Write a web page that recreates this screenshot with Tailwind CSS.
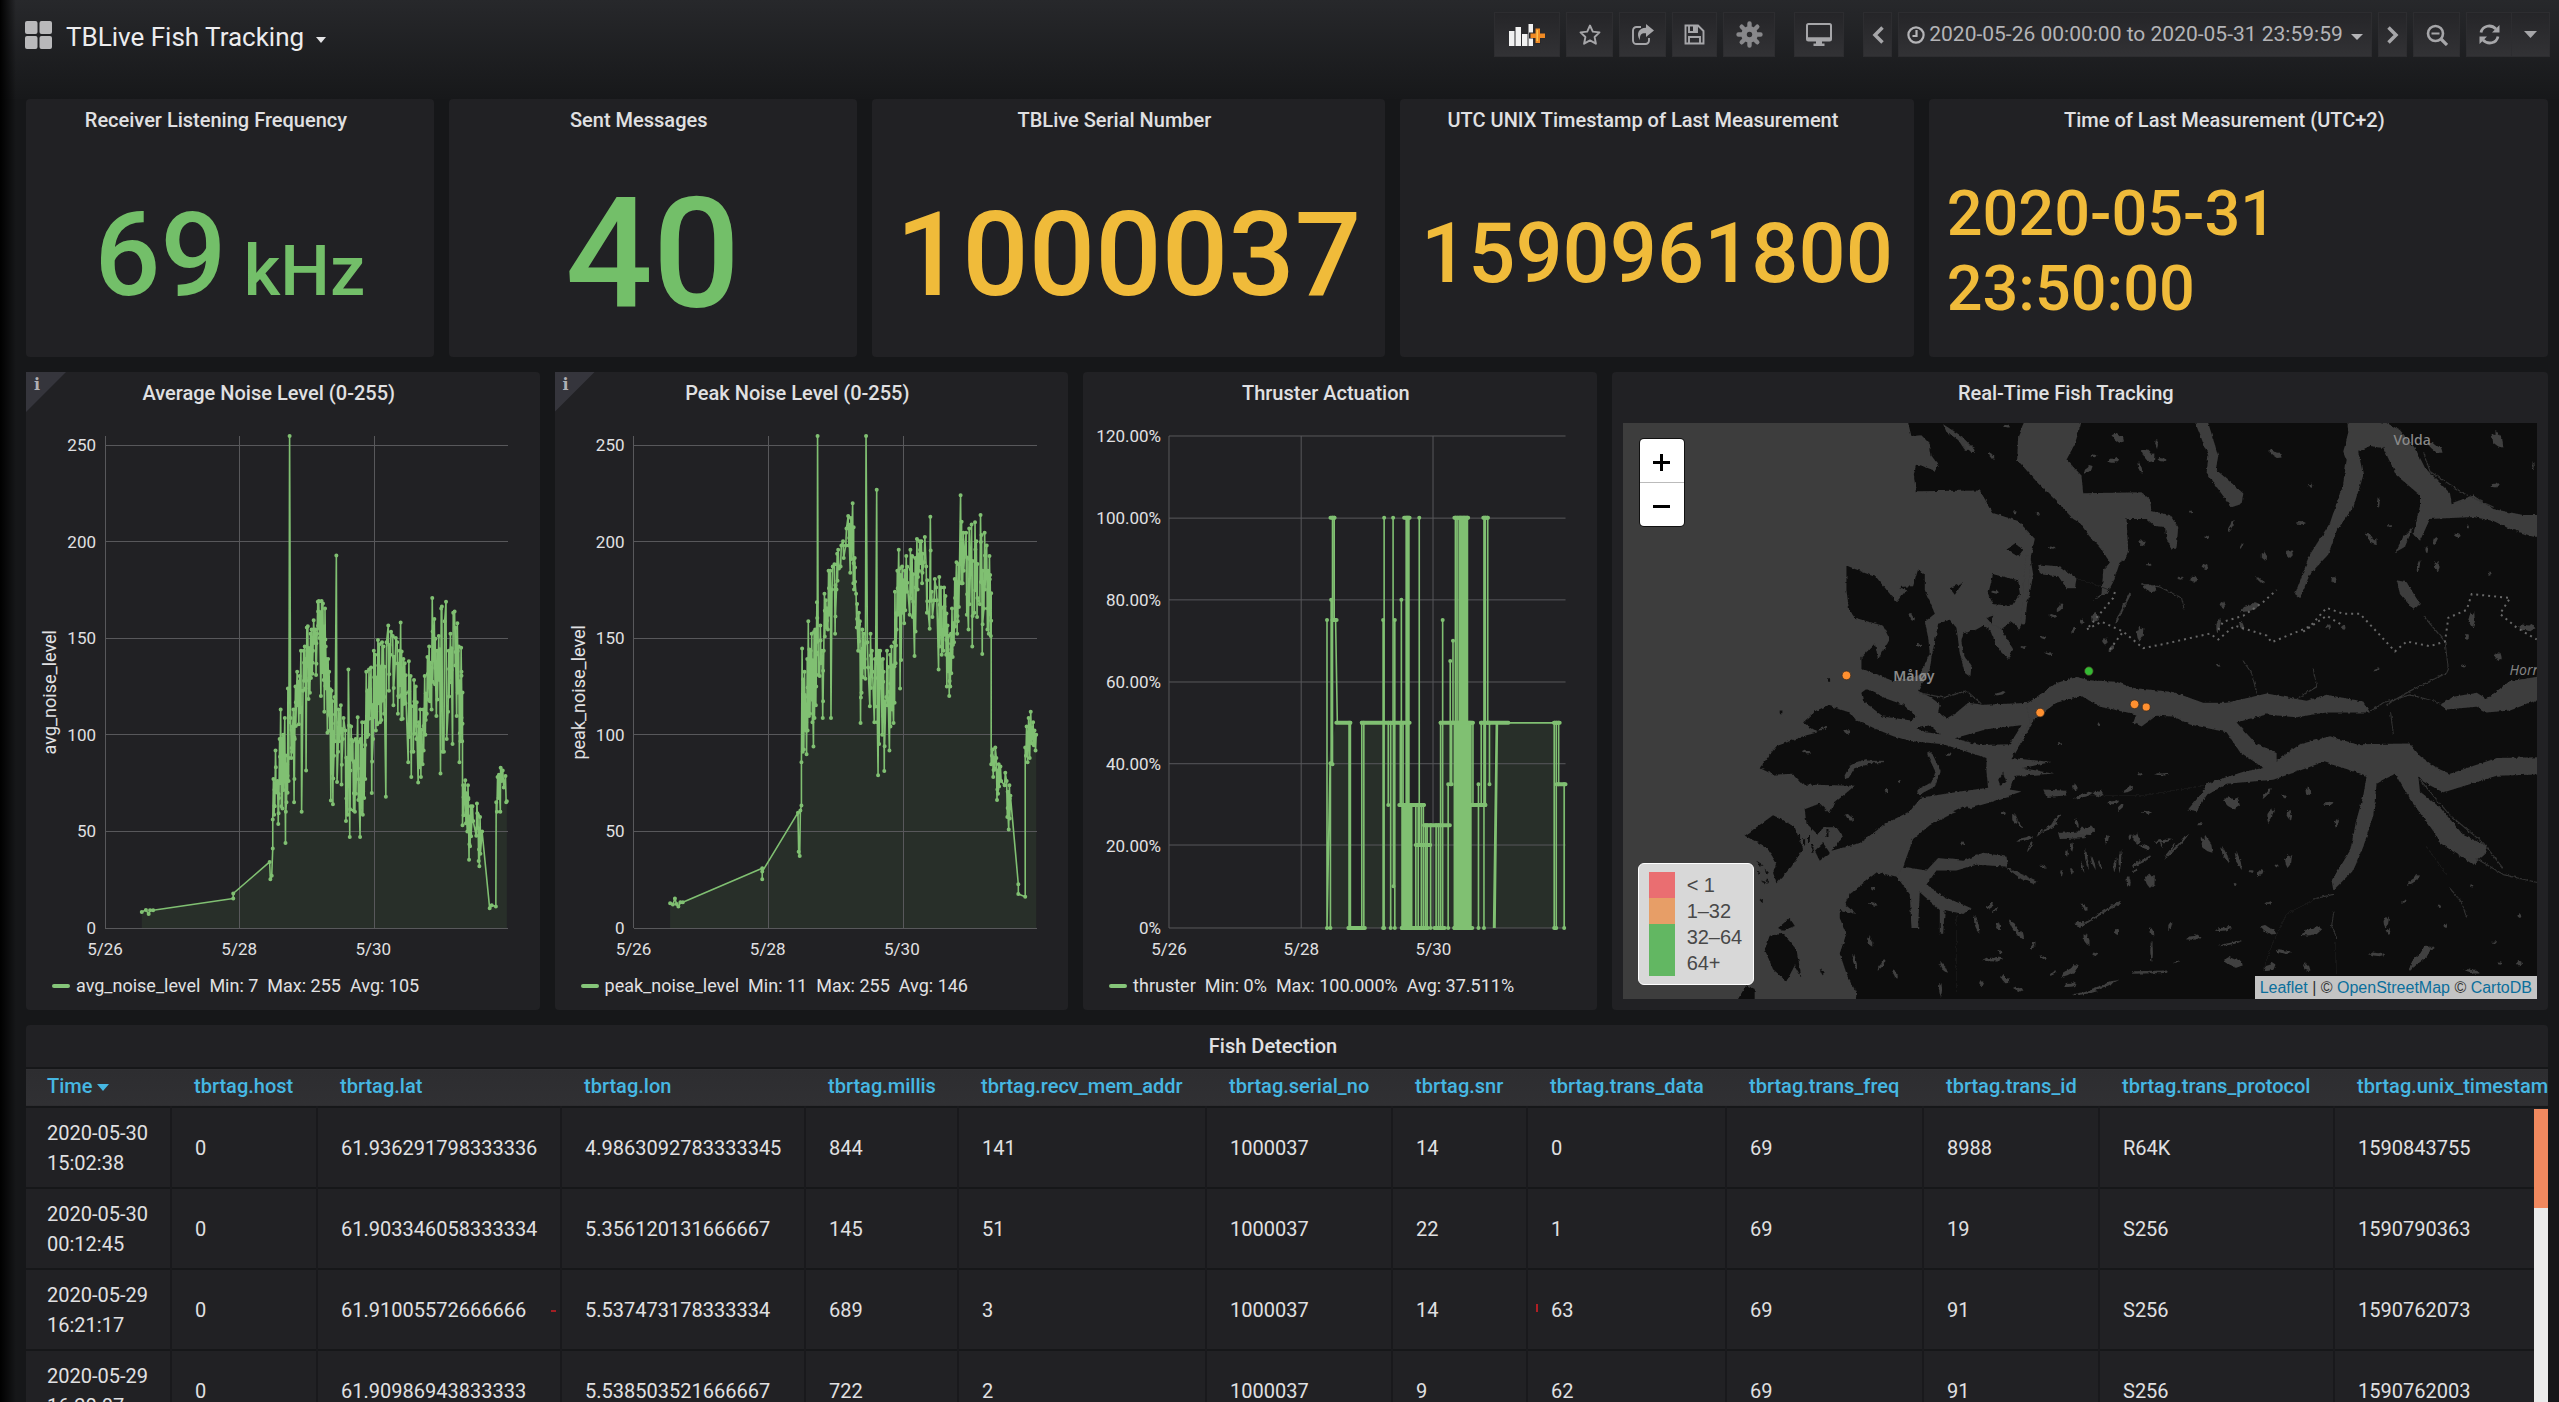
<!DOCTYPE html>
<html lang="en">
<head>
<meta charset="utf-8">
<meta name="viewport" content="width=device-width, initial-scale=1">
<title>TBLive Fish Tracking</title>
<script src="https://cdn.jsdelivr.net/npm/@tailwindcss/browser@4"></script>
</head>
<body class="relative flex h-screen flex-col overflow-hidden bg-[#161719] font-['Roboto',sans-serif] text-xl text-[#e0e0e2]">

<header class="flex h-[99px] shrink-0 items-start justify-between bg-linear-to-b from-[#27282b] to-[#17181a] pt-3 pr-[9px] pl-[25px]">
  <button class="flex h-[46px] items-center gap-[14px] text-[26px] text-[#ececee]">
    <svg class="h-7 w-[27px]" viewBox="0 0 27 28" fill="#b9b9bb"><rect width="12.5" height="13" rx="2"/><rect x="14.500" width="12.500" height="13" rx="2"/><rect y="15" width="12.500" height="13" rx="2"/><rect x="14.500" y="15" width="12.500" height="13" rx="2"/></svg>
    <span class="flex items-center gap-3 pt-1">TBLive Fish Tracking
      <svg class="mt-1.5 h-[6px] w-[10px]" viewBox="0 0 10 6" fill="#e4e4e6"><path d="M0 0h10L5 6z"/></svg></span>
  </button>
  <nav class="flex gap-[6px] text-[#a6a6a9]" aria-label="Dashboard tools">
    <button aria-label="Add panel" class="flex h-[45px] w-[66px] items-center justify-center border border-[#2d2d30] bg-linear-to-b from-[#252528] to-[#323235]">
      <svg class="h-[23px] w-9" viewBox="0 0 36 23"><path fill="#f2f2f2" d="M0 8h5.500v15H0zM6.500 4H12v19H6.500zM13 11h5.500v12H13zM19.500 1H24v22h-4.500z"/><path d="M20 9.500h5V4h7v5.500h4v6h-4V21h-7v-5.500h-5z" fill="#29292c"/><path fill="#f08a24" d="M26.500 5.500h4.500v5h5v4.500h-5v5h-4.500v-5h-5v-4.500h5z"/><path d="M27.500 7h1.500v11h-1.500z" fill="#fbc04d"/></svg>
    </button>
    <button aria-label="Star" class="flex h-[45px] w-[47px] items-center justify-center border border-[#2d2d30] bg-linear-to-b from-[#252528] to-[#323235]">
      <svg class="h-[22px] w-[22px]" viewBox="0 0 22 22" fill="none" stroke="currentColor" stroke-width="1.900" stroke-linejoin="round"><path d="M11 1.500l2.800 6.100 6.700.8-4.900 4.600 1.300 6.700L11 16.400l-5.900 3.300 1.300-6.700L1.500 8.400l6.700-.8z"/></svg>
    </button>
    <button aria-label="Share" class="flex h-[45px] w-[47px] items-center justify-center border border-[#2d2d30] bg-linear-to-b from-[#252528] to-[#323235]">
      <svg class="h-[22px] w-6" viewBox="0 0 24 22" fill="none" stroke="currentColor" stroke-width="1.900"><path d="M10 3H5.500A3.500 3.500 0 002 6.500v10A3.500 3.500 0 005.500 20h9a3.500 3.500 0 003.500-3.500V14"/><path fill="currentColor" stroke="none" d="M15 0l8 6.500-8 6.500V9.300c-4.500-.3-6.500 1.200-6 7C4.500 9.500 8 3.900 15 3.700z"/></svg>
    </button>
    <button aria-label="Save" class="flex h-[45px] w-[45px] items-center justify-center border border-[#2d2d30] bg-linear-to-b from-[#252528] to-[#323235]">
      <svg class="h-[21px] w-[21px]" viewBox="0 0 21 21" fill="none" stroke="currentColor" stroke-width="1.900"><path d="M1.500 1.500h12.500l5.500 5.500v12.500h-18z"/><path d="M5 19.500v-6.500h11v6.500M5 1.500v6.500h8v-6.500"/><path d="M10.500 2v5" stroke-width="3"/></svg>
    </button>
    <button aria-label="Settings" class="flex h-[45px] w-[52px] items-center justify-center border border-[#2d2d30] bg-linear-to-b from-[#252528] to-[#323235] text-[#88888b]">
      <svg class="h-[27px] w-[27px]" viewBox="0 0 27 27"><g stroke="currentColor" stroke-width="4.400" stroke-linecap="round"><path d="M13.500 2.500v22M2.500 13.500h22M5.700 5.700l15.600 15.600M21.300 5.700L5.700 21.300"/></g><circle cx="13.500" cy="13.500" r="8.300" fill="currentColor"/><circle cx="13.500" cy="13.500" r="2.700" fill="#2c2c2f"/></svg>
    </button>
    <button aria-label="Cycle view mode" class="mx-[13px] flex h-[45px] w-[50px] items-center justify-center border border-[#2d2d30] bg-linear-to-b from-[#252528] to-[#323235]">
      <svg class="h-[23px] w-[26px]" viewBox="0 0 26 23" fill="none" stroke="currentColor" stroke-width="2"><rect x="1" y="1" width="24" height="16.500" rx="1.500"/><path d="M1.500 16h23" stroke-width="3.500"/><path fill="currentColor" stroke="none" d="M10 17h6v3.500h2.500V23h-11v-2.500H10z"/></svg>
    </button>
    <button aria-label="Earlier" class="flex h-[45px] w-[29px] items-center justify-center border border-[#2d2d30] bg-linear-to-b from-[#252528] to-[#323235]">
      <svg class="h-[18px] w-3" viewBox="0 0 12 18" fill="none" stroke="currentColor" stroke-width="3.500"><path d="M10.500 1.500L3 9l7.500 7.500"/></svg>
    </button>
    <button class="flex h-[45px] w-[474px] items-center justify-center gap-1 border border-[#2d2d30] bg-linear-to-b from-[#252528] to-[#323235] pt-px text-[21px] whitespace-nowrap text-[#b4b4b7]">
      <svg class="h-[18px] w-[18px]" viewBox="0 0 18 18" fill="none" stroke="currentColor" stroke-width="2.200"><circle cx="9" cy="9" r="7.600"/><path d="M9.500 4v6H5.500"/></svg>
      2020-05-26 00:00:00 to 2020-05-31 23:59:59
      <svg class="mt-1 ml-1 h-[6px] w-3" viewBox="0 0 12 6" fill="currentColor"><path d="M0 0h12L6 6z"/></svg>
    </button>
    <button aria-label="Later" class="flex h-[45px] w-[29px] items-center justify-center border border-[#2d2d30] bg-linear-to-b from-[#252528] to-[#323235]">
      <svg class="h-[18px] w-3" viewBox="0 0 12 18" fill="none" stroke="currentColor" stroke-width="3.500"><path d="M1.500 1.500L9 9l-7.500 7.500"/></svg>
    </button>
    <button aria-label="Zoom out" class="flex h-[45px] w-[47px] items-center justify-center border border-[#2d2d30] bg-linear-to-b from-[#252528] to-[#323235]">
      <svg class="h-[22px] w-[22px]" viewBox="0 0 22 22" fill="none" stroke="currentColor" stroke-width="2.600"><circle cx="9.500" cy="9.500" r="7.500"/><path d="M15 15l6 6" stroke-width="3.200"/><path d="M5.500 9.500h8" stroke-width="2"/></svg>
    </button>
    <div class="flex">
      <button aria-label="Refresh" class="flex h-[45px] w-[46px] items-center justify-center border border-[#2d2d30] bg-linear-to-b from-[#252528] to-[#323235]">
        <svg class="h-[21px] w-[21px]" viewBox="0 0 21 21" fill="none" stroke="currentColor" stroke-width="2.800"><path d="M2 8.500C3.500 1.500 12 0 17 5M19 12.500C17.500 19.500 9 21 4 16"/><path fill="currentColor" stroke="none" d="M20.500 1v7.500h-7.500zM.5 20v-7.500H8z"/></svg>
      </button>
      <button aria-label="Refresh interval" class="flex h-[45px] w-[38px] items-center justify-center border border-l-0 border-[#2d2d30] bg-linear-to-b from-[#252528] to-[#323235]">
        <svg class="h-[7px] w-[13px]" viewBox="0 0 13 7" fill="currentColor"><path d="M0 0h13L6.500 7z"/></svg>
      </button>
    </div>
  </nav>
</header>

<main class="grid min-h-0 flex-1 grid-cols-24 grid-rows-[258px_638px_minmax(0,1fr)] gap-[15px] pr-[11px] pl-[26px]">
  <section class="col-span-4 flex min-w-0 flex-col rounded-sm bg-[#212124]">
    <h2 class="flex h-[42px] shrink-0 items-center justify-center pr-7 font-medium">Receiver Listening Frequency</h2>
    <p class="flex flex-1 items-center justify-center pt-3 font-medium text-[#73bf69]"><span class="text-[116px] leading-none whitespace-pre">69<span class="text-[70px]"> kHz</span></span></p>
  </section>
  <section class="col-span-4 flex min-w-0 flex-col rounded-sm bg-[#212124]">
    <h2 class="flex h-[42px] shrink-0 items-center justify-center pr-7 font-medium">Sent Messages</h2>
    <p class="flex flex-1 items-center justify-center pt-3 text-[154px] leading-none font-medium text-[#73bf69]">40</p>
  </section>
  <section class="col-span-5 flex min-w-0 flex-col rounded-sm bg-[#212124]">
    <h2 class="flex h-[42px] shrink-0 items-center justify-center pr-7 font-medium">TBLive Serial Number</h2>
    <p class="flex flex-1 items-center justify-center pt-3 text-[117px] leading-none font-medium text-[#f0bb3a]">1000037</p>
  </section>
  <section class="col-span-5 flex min-w-0 flex-col rounded-sm bg-[#212124]">
    <h2 class="flex h-[42px] shrink-0 items-center justify-center pr-7 font-medium">UTC UNIX Timestamp of Last Measurement</h2>
    <p class="flex flex-1 items-center justify-center pt-2 text-[83px] leading-none font-medium text-[#f0bb3a]">1590961800</p>
  </section>
  <section class="col-span-6 flex min-w-0 flex-col rounded-sm bg-[#212124]">
    <h2 class="flex h-[42px] shrink-0 items-center justify-center pr-7 font-medium">Time of Last Measurement (UTC+2)</h2>
    <p class="flex flex-1 items-center px-[18px] pt-1 text-[63px] leading-[75px] font-medium text-[#f0bb3a]">2020-05-31<br>23:50:00</p>
  </section>

  <section class="relative col-span-5 flex min-w-0 flex-col rounded-sm bg-[#212124]">
    <span class="absolute top-0 left-0 h-10 w-10 bg-[#35353c] pt-[3px] pl-2 font-['DejaVu_Serif',serif] text-base leading-5 font-bold text-[#b0b0b4] [clip-path:polygon(0_0,100%_0,0_100%)]">i</span>
    <h2 class="flex h-[42px] shrink-0 items-center justify-center pr-7 font-medium">Average Noise Level (0-255)</h2>
    <div class="mt-[22px] grid grid-cols-[79px_1fr] grid-rows-[492px_43px] pr-8 text-[17px]">
      <div class="flex justify-between pr-[9px]">
        <span class="flex items-center justify-center pt-5 pl-2.5 text-lg [writing-mode:sideways-lr]">avg_noise_level</span>
        <div class="flex flex-col items-end justify-between pt-[9px] leading-0"><span class="h-0">250</span><span class="h-0">200</span><span class="h-0">150</span><span class="h-0">100</span><span class="h-0">50</span><span class="h-0">0</span></div>
      </div>
      <svg id="avg" class="h-full w-full overflow-visible" viewBox="305 180 1171 1169" preserveAspectRatio="none"></svg>
      <div class="col-start-2 grid grid-cols-3 items-center"><span class="flex w-0 justify-center">5/26</span><span class="flex w-0 justify-center">5/28</span><span class="flex w-0 justify-center">5/30</span></div>
    </div>
    <p class="flex items-center gap-[9px] pl-[26px] text-lg leading-[30px]"><span class="flex items-center gap-[6px]"><span class="h-1 w-[18px] rounded-sm bg-[#85c579]"></span>avg_noise_level</span><span>Min: 7</span><span>Max: 255</span><span>Avg: 105</span></p>
  </section>
  <section class="relative col-span-5 flex min-w-0 flex-col rounded-sm bg-[#212124]">
    <span class="absolute top-0 left-0 h-10 w-10 bg-[#35353c] pt-[3px] pl-2 font-['DejaVu_Serif',serif] text-base leading-5 font-bold text-[#b0b0b4] [clip-path:polygon(0_0,100%_0,0_100%)]">i</span>
    <h2 class="flex h-[42px] shrink-0 items-center justify-center pr-7 font-medium">Peak Noise Level (0-255)</h2>
    <div class="mt-[22px] grid grid-cols-[79px_1fr] grid-rows-[492px_43px] pr-8 text-[17px]">
      <div class="flex justify-between pr-[9px]">
        <span class="flex items-center justify-center pt-5 pl-2.5 text-lg [writing-mode:sideways-lr]">peak_noise_level</span>
        <div class="flex flex-col items-end justify-between pt-[9px] leading-0"><span class="h-0">250</span><span class="h-0">200</span><span class="h-0">150</span><span class="h-0">100</span><span class="h-0">50</span><span class="h-0">0</span></div>
      </div>
      <svg id="peak" class="h-full w-full overflow-visible" viewBox="273 180 1171 1169" preserveAspectRatio="none"></svg>
      <div class="col-start-2 grid grid-cols-3 items-center"><span class="flex w-0 justify-center">5/26</span><span class="flex w-0 justify-center">5/28</span><span class="flex w-0 justify-center">5/30</span></div>
    </div>
    <p class="flex items-center gap-[9px] pl-[26px] text-lg leading-[30px]"><span class="flex items-center gap-[6px]"><span class="h-1 w-[18px] rounded-sm bg-[#85c579]"></span>peak_noise_level</span><span>Min: 11</span><span>Max: 255</span><span>Avg: 146</span></p>
  </section>
  <section class="relative col-span-5 flex min-w-0 flex-col rounded-sm bg-[#212124]">
    <h2 class="flex h-[42px] shrink-0 items-center justify-center pr-7 font-medium">Thruster Actuation</h2>
    <div class="mt-[22px] grid grid-cols-[86px_1fr] grid-rows-[492px_43px] pr-[31px] text-[17px]">
      <div class="flex justify-end pr-2">
        <div class="flex flex-col items-end justify-between leading-0"><span class="h-0">120.00%</span><span class="h-0">100.00%</span><span class="h-0">80.00%</span><span class="h-0">60.00%</span><span class="h-0">40.00%</span><span class="h-0">20.00%</span><span class="h-0">0%</span></div>
      </div>
      <svg id="thr" class="h-full w-full overflow-visible" viewBox="289 181 1152 1168" preserveAspectRatio="none"></svg>
      <div class="col-start-2 grid grid-cols-3 items-center"><span class="flex w-0 justify-center">5/26</span><span class="flex w-0 justify-center">5/28</span><span class="flex w-0 justify-center">5/30</span></div>
    </div>
    <p class="flex items-center gap-[9px] pl-[26px] text-lg leading-[30px]"><span class="flex items-center gap-[6px]"><span class="h-1 w-[18px] rounded-sm bg-[#85c579]"></span>thruster</span><span>Min: 0%</span><span>Max: 100.000%</span><span>Avg: 37.511%</span></p>
  </section>

  <section class="col-span-9 flex min-w-0 flex-col rounded-sm bg-[#212124] px-[11px] pb-[11px]">
    <h2 class="flex h-[51px] shrink-0 items-center justify-center pr-7 pb-[9px] font-medium">Real-Time Fish Tracking</h2>
    <div class="relative flex-1 overflow-hidden bg-[#3c3c3c]">
      <svg class="absolute inset-0 h-full w-full" viewBox="40 57 2742 1458" preserveAspectRatio="none">
        <defs><filter id="rough" x="0" y="0" width="100%" height="100%"><feTurbulence type="fractalNoise" baseFrequency=".09" numOctaves="2" seed="4"/><feDisplacementMap in="SourceGraphic" scale="9" xChannelSelector="R" yChannelSelector="G"/></filter></defs>
        <g filter="url(#rough)">
          <rect x="0" y="0" width="2900" height="1600" fill="#3c3c3c"/>
          <g fill="#0e0e0e">
            <path d="M890 40 905 90 935 88 960 110 965 140 988 165 975 178 920 160 912 185 918 230 1110 228 1150 285 1225 305 1275 350 1262 400 1270 440 1260 490 1240 550 1230 580 1205 560 1180 575 1165 590 1120 570 1100 580 1060 590 1055 610 1065 650 1085 670 1082 700 1065 690 1050 640 1040 575 1020 555 985 565 975 610 965 650 960 680 935 720 925 735 960 750 990 768 985 790 1010 805 1040 790 1075 765 1120 770 1260 765 1300 740 1300 790 1270 810 1240 860 1205 905 1325 915 1240 930 1330 945 1215 950 1200 985 1235 990 1130 1020 1030 1045 960 1075 910 1110 880 1180 900 1240 860 1205 800 1195 720 1250 705 1275 740 1300 690 1290 690 1310 710 1350 690 1400 710 1450 740 1500 735 1550 2850 1550 2850 40z"/>
            <path d="M450 930 500 875 580 850 625 840 580 815 620 785 655 772 720 790 740 810 850 850 900 862 1000 870 1130 905 1130 940 1135 980 1050 990 935 1005 900 1040 830 1070 750 1120 665 1140 700 1105 680 1080 640 1080 625 1100 590 1070 585 1035 630 1020 660 1045 672 1020 735 975 580 972 550 945 490 947z"/>
            <path d="M405 1102 490 1050 520 1062 555 1080 580 1135 545 1180 500 1222 490 1195 500 1170 470 1130z"/>
            <path d="M710 418 760 435 800 448 860 510 890 480 868 472 910 470 925 428 945 440 945 480 975 540 945 560 955 600 960 640 930 695 850 710 790 690 755 680 755 650 795 615 805 655 840 605 820 570 735 550 718 530 710 480z"/>
            <path d="M755 740 770 730 830 755 880 770 920 800 905 810 820 800 760 760zM920 830 960 822 990 845 950 840zM1035 855 1130 832 1235 822 1200 870 1110 872zM1135 490 1150 440 1225 455 1230 490 1205 520 1150 515zM1020 475 1060 460 1035 492zM1190 378 1215 362 1240 378 1225 395zM465 1390 480 1355 520 1350 560 1390 575 1460 555 1430 530 1470 490 1440zM385 1515 410 1480 435 1490 435 1540 385 1540zM505 1335 540 1310 555 1330 520 1342zM1165 960 1180 942 1190 965 1172 975zM1030 1040 1060 1028 1085 1035 1050 1047zM615 1140 640 1120 660 1145 630 1165zM1130 550 1150 545 1145 565zM440 1165 460 1175 450 1180zM450 1265 460 1262 458 1272zM630 1440 645 1450 638 1455zM655 703l6 0 0 9-6 0zM510 785l8 0 0 7-8 0z"/>
            <path d="M565 1100l6 0 0 14-6 0zM580 1108l6 0 0 16-6 0zM595 1100l5 0 0 20-5 0zM605 1125l6 0 0 20-6 0zM650 1085l6 0 0 20-6 0zM440 1190l12 6-4 6zM465 1185l12 10-6 6zM455 1215l14 4-6 6zM470 1210l8 8-4 6z"/>
          </g>
          <g fill="#3c3c3c">
            <path d="M1250 40 1420 40 1395 110 1370 150 1415 190 1420 235 1595 232 1620 250 1625 280 1680 290 1705 320 1700 375 1685 375 1670 350 1665 320 1635 318 1610 300 1550 300 1555 380 1548 400 1530 410 1510 460 1490 490 1450 505 1475 490 1480 430 1500 410 1470 370 1440 345 1410 310 1390 300 1340 255 1285 210 1222 150 1225 90z"/>
            <path d="M1250 768 1340 715 1400 700 1440 708 1520 712 1570 728 1690 738 1780 765 1850 765 1970 742 2090 760 2150 745 2260 762 2280 790 2150 790 2060 802 1970 795 1880 815 1940 870 2000 890 2000 912 2070 870 2160 850 2240 870 2400 868 2430 900 2480 930 2520 945 2660 905 2850 902 2850 945 2660 950 2500 992 2440 965 2425 950 2430 990 2490 1030 2560 1100 2625 1125 2630 1145 2590 1175 2490 1120 2470 1090 2400 1010 2355 945 2300 970 2290 1050 2260 1130 2230 1190 2170 1240 2165 1215 2220 1140 2240 1060 2260 1000 2270 950 2200 930 2140 915 2060 940 1990 960 1850 970 1790 1000 1760 1040 1735 1035 1770 1000 1790 970 1900 940 1960 930 1890 890 1850 840 1740 820 1690 800 1640 798 1595 825 1570 815 1580 795 1470 775 1415 748 1340 765 1260 815z"/>
            <path d="M1760 40 1795 57 1825 140 1818 175 1900 235 1895 262 1865 270 1790 185 1795 140 1760 65zM2210 40 2330 57 2370 75 2415 120 2445 170 2520 235 2525 260 2590 240 2650 275 2740 290 2850 290 2850 345 2770 345 2700 325 2650 305 2590 295 2460 300 2430 355 2410 340 2430 265 2430 240 2360 190 2320 120 2280 115 2245 130 2260 190 2230 270 2180 330 2155 390 2100 440 2070 500 2055 490 2100 390 2160 310 2200 210 2210 150 2200 130 2215 80z"/>
            <path d="M2410 320 2385 370 2355 385 2380 345zM2360 455 2390 460 2430 515 2410 530 2370 490zM2490 770 2530 750 2600 740 2630 755 2700 710 2850 690 2850 735 2700 785 2630 790 2600 775 2510 782zM1285 415 1350 420 1400 450 1395 475 1370 475 1345 445 1290 440zM1130 560 1175 580 1210 630 1195 655 1160 620z"/>
            <path d="M880 1180 950 1190 985 1158 1060 1165 1120 1145 1190 1155 1195 1180 1100 1175 1040 1190 980 1190 950 1225 1000 1255 1085 1285 1060 1300 1005 1290 1000 1350 990 1350 990 1290 930 1245 925 1335 905 1335 900 1250 860 1205zM1185 1180 1280 1215 1275 1225 1235 1212zM1000 60 1055 90 1095 125 1065 125 1045 100 1010 80zM1300 985 1370 988 1370 1000 1310 1004zM1345 1095 1425 1090 1425 1108 1350 1110z"/>
          </g>
          <g fill="none" stroke="#3c3c3c" stroke-linecap="round" stroke-linejoin="round">
            <path stroke-width="14" d="M960 895 985 940 970 972 930 990M712 950 730 925 770 915M1255 400 1240 560"/>
            <path stroke-width="6" d="M770 915 820 915M1270 810 1240 850 1215 890M1570 1448 1670 1446M1410 1332 1470 1300 1530 1270M1570 1178 1620 1155M2400 1440 2470 1385M1520 560 1560 490"/>
            <path stroke-width="3" stroke="#343434" d="M930 740 1000 752 1070 735 1115 768M1900 660 1925 690 1940 740M2060 755 2120 725 2110 680M1595 465 1650 472 1715 500 1722 525M2285 785 2320 765 2400 745 2490 765M2350 845 2342 790M2330 770 2400 735 2510 690 2515 680 2505 610 2440 545M2600 1160 2680 1200 2782 1220M2430 960 2520 1050 2620 1120 2680 1185M2170 1250 2110 1262M2172 1295 2165 1330 2180 1360M2520 1235 2555 1270 2570 1310M2440 130 2460 180 2560 235 2650 270"/>
            <path stroke-width="2" stroke="#1c1c1c" d="M2120 1260 2030 1300 1990 1370 1960 1440M1410 1000 1600 1000 1780 975M1040 1300 1040 1500M1400 450 1500 480M2175 1370 2180 1450M2450 1130 2510 1200"/>
          </g>
          <g id="lakes" fill="#404040"></g>
        </g>
        <g fill="none" stroke="#686868" stroke-width="2"><path vector-effect="non-scaling-stroke" stroke-dasharray="2 4" d="M1515 485 1510 500 1430 580 1475 560 1540 585 1600 627 1670 615 1800 590 1825 605 1875 570 1970 595 1985 612 2100 572 2150 525 2200 540 2250 540 2355 635 2390 610 2460 622 2505 610 2515 550 2570 530 2585 490 2700 500 2670 540 2720 575 2780 605M1825 580 1840 560 1900 545 1960 510 2000 480M1500 630 1540 585M2080 585 2150 545 2200 570"/></g>
        <g stroke="#3b2a1c" stroke-width="2"><g fill="#ff9030"><ellipse cx="710" cy="696" rx="13" ry="11"/><ellipse cx="1291" cy="790" rx="13" ry="11"/><ellipse cx="1574" cy="769" rx="13" ry="11"/><ellipse cx="1609" cy="776" rx="12" ry="10"/></g><ellipse cx="1437" cy="685" rx="13" ry="11" fill="#34b934"/></g>
      </svg>
      <span class="absolute top-[42.5%] left-[29.6%] font-['Noto_Sans',sans-serif] text-sm leading-4 font-semibold text-[#8a8a8a]">Måløy</span>
      <span class="absolute top-[1.5%] left-[84.3%] font-['Noto_Sans',sans-serif] text-sm leading-4 font-medium text-[#8a8a8a]">Volda</span>
      <span class="absolute top-[41.5%] left-[97%] font-['Noto_Sans',sans-serif] text-sm leading-4 text-[#828282] italic">Horn</span>
      <div class="absolute top-4 left-[17px] flex w-11 flex-col overflow-hidden rounded-sm bg-white text-black shadow-[0_0_0_1px_#111]">
        <button aria-label="Zoom in" class="flex h-11 items-center justify-center border-b border-[#bbb] pt-1"><svg class="h-[17px] w-[17px]" viewBox="0 0 17 17"><path stroke="#000" stroke-width="3" d="M0 8.500h17M8.500 0v17"/></svg></button>
        <button aria-label="Zoom out of map" class="flex h-[43px] items-center justify-center pt-1"><svg class="h-[17px] w-[17px]" viewBox="0 0 17 17"><path stroke="#000" stroke-width="3" d="M0 8.500h17"/></svg></button>
      </div>
      <ul class="absolute bottom-[14px] left-[15px] w-[116px] rounded-md border border-white bg-[#d8d8d8] py-2 pl-[10px] font-['Liberation_Sans',sans-serif] text-xl leading-[26px] text-[#484848]">
        <li class="flex gap-3"><span class="w-[26px] bg-[#ea6e71]"></span>&lt; 1</li>
        <li class="flex gap-3"><span class="w-[26px] bg-[#e79e67]"></span>1–32</li>
        <li class="flex gap-3"><span class="w-[26px] bg-[#62b762]"></span>32–64</li>
        <li class="flex gap-3"><span class="w-[26px] bg-[#62b762]"></span>64+</li>
      </ul>
      <p class="absolute right-0 bottom-0 bg-[#c4c4c4] px-[5px] font-['Liberation_Sans',sans-serif] text-base leading-[23px] text-[#333]"><a href="#" class="text-[#0b6f9c]">Leaflet</a> | © <a href="#" class="text-[#0b6f9c]">OpenStreetMap</a> © <a href="#" class="text-[#0b6f9c]">CartoDB</a></p>
    </div>
  </section>

  <section class="relative col-span-24 flex min-w-0 flex-col overflow-hidden rounded-t-sm bg-[#212124]">
    <h2 class="flex h-[42px] shrink-0 items-center justify-center pr-7 font-medium">Fish Detection</h2>
    <table class="w-full table-fixed border-collapse text-left">
      <thead>
        <tr id="cols" class="h-[39px] border-y-2 border-[#161719] bg-linear-to-b from-[#2d2d30] to-[#303033] text-[#46b7e2]"></tr>
      </thead>
      <tbody id="rows"></tbody>
    </table>
    <div class="absolute top-[84px] right-0 bottom-0 w-[14px] bg-[#ebebeb]"><div class="h-[99px] bg-[#f1895f]"></div></div>
  </section>
</main>
<div class="pointer-events-none absolute inset-y-0 left-0 w-4 bg-linear-to-r from-black to-transparent"></div>

<script>
// Table
const cols = [['Time','w-[145px]'],['tbrtag.host','w-[146px]'],['tbrtag.lat','w-[244px]'],['tbrtag.lon','w-[244px]'],['tbrtag.millis','w-[153px]'],['tbrtag.recv_mem_addr','w-[248px]'],['tbrtag.serial_no','w-[186px]'],['tbrtag.snr','w-[135px]'],['tbrtag.trans_data','w-[199px]'],['tbrtag.trans_freq','w-[197px]'],['tbrtag.trans_id','w-[176px]'],['tbrtag.trans_protocol','w-[235px]'],['tbrtag.unix_timestamp','w-[214px]']];
const rows = [
  ['2020-05-30 15:02:38','0','61.936291798333336','4.9863092783333345','844','141','1000037','14','0','69','8988','R64K','1590843755'],
  ['2020-05-30 00:12:45','0','61.903346058333334','5.356120131666667','145','51','1000037','22','1','69','19','S256','1590790363'],
  ['2020-05-29 16:21:17','0','61.91005572666666','5.537473178333334','689','3','1000037','14','63','69','91','S256','1590762073'],
  ['2020-05-29 16:20:07','0','61.90986943833333','5.538503521666667','722','2','1000037','9','62','69','91','S256','1590762003']];
document.getElementById('cols').innerHTML = cols.map((c, i) => `<th scope="col" class="${c[1]} ${i ? 'pl-[23px]' : 'pl-[21px]'} pb-[3px] font-medium whitespace-nowrap">${c[0]}${i ? '' : ' <svg class="inline h-[7px] w-3 align-middle" viewBox="0 0 12 7" fill="currentColor"><path d="M0 0h12L6 7z"/></svg>'}</th>`).join('');
const specks = {'2-3': '<span class="absolute top-1/2 -left-[11px] h-[2px] w-[5px] bg-[#a31f24]"></span>', '2-8': '<span class="absolute top-[34px] left-2 h-[8px] w-[2px] bg-[#b01f24]"></span>'};
document.getElementById('rows').innerHTML = rows.map((r, j) => '<tr class="h-[81px] border-b-2 border-[#161719]">' + r.map((c, i) => `<td class="relative ${i ? 'border-l-2 pl-[23px]' : 'pr-5 pl-[21px]'} border-[#19191c] leading-[30px]">${c}${specks[j + '-' + i] || ''}</td>`).join('') + '</tr>').join('');

// Charts: vertical strokes are [x, high, low] in plot units
const NS = 'vector-effect="non-scaling-stroke"';
const grid = (xs, ys, x0, x1, y0, y1) => `<path ${NS} shape-rendering="crispEdges" stroke="#58585b" fill="none" d="${xs.map(x => `M${x} ${y0}V${y1}`).join('')}${ys.map(y => `M${x0} ${y}H${x1}`).join('')}"/>`;
const dots = pts => `<path ${NS} stroke="#80c072" stroke-width="4" stroke-linecap="round" d="${pts.map(p => `M${p[0]} ${p[1]}h.1`).join('')}"/>`;
function noise(id, dx, head, bars, tail) {
  const pts = head.slice();
  bars.forEach(([x, hi, lo], i) => {
    const up = i % 2;
    pts.push([x - 1, up ? lo : hi], [x + 1, up ? hi : lo]);
    if (lo - hi > 60 && lo - hi < 300) pts.push([x + 2, hi + (lo - hi) * .3], [x + 2, lo - (lo - hi) * .25]);
  });
  pts.push(...tail);
  const line = pts.map(p => p.join(' ')).join('L');
  document.getElementById(id).innerHTML =
    `<path fill="#73bf69" fill-opacity=".09" d="M${pts[0][0]} 1349L${line}V1349z"/>` +
    grid([305, 696, 1088].map(x => x - dx), [202, 431, 661, 890, 1119, 1349], 305 - dx, 1476 - dx, 180, 1349) +
    `<path ${NS} fill="none" stroke="#80c072" stroke-width="1.600" stroke-linejoin="round" d="M${line}"/>` + dots(pts);
}
noise('avg', 0, [[412,1311],[424,1306],[432,1316],[436,1307],[445,1307],[678,1279],[678,1267],[784,1192],[786,1233],[790,1225],[793,1160],[793,1091]],
 [[796,995,1080],[800,927,1060],[808,1000,1102],[812,900,1040],[817,830,1060],[822,890,1065],[829,850,1147],[834,960,1050],[838,780,1000],[841,180,860],[846,850,945],[850,870,930],[854,830,1050],[858,775,900],[865,740,820],[870,750,865],[876,690,1073],[882,690,785],[887,680,780],[891,635,975],[896,632,805],[902,650,790],[907,640,745],[911,618,690],[918,640,748],[923,574,650],[928,572,660],[934,572,798],[940,578,760],[944,590,835],[948,680,780],[953,710,885],[958,740,880],[963,785,1046],[967,810,1055],[972,800,940],[979,464,1002],[984,830,930],[992,820,1008],[998,850,900],[1005,880,1095],[1012,735,1080],[1016,868,1133],[1020,870,975],[1027,905,1070],[1033,900,1073],[1041,848,1045],[1048,900,1133],[1054,860,1080],[1060,860,1040],[1066,740,895],[1072,735,890],[1080,730,1028],[1086,690,900],[1092,700,880],[1098,665,865],[1104,675,860],[1110,670,855],[1116,680,840],[1123,670,1037],[1130,630,785],[1136,645,700],[1143,655,820],[1150,660,720],[1156,670,840],[1161,690,800],[1166,623,853],[1172,710,852],[1178,720,815],[1188,715,955],[1195,750,990],[1203,760,930],[1210,775,900],[1217,860,1003],[1223,830,990],[1230,830,960],[1236,750,890],[1242,705,840],[1249,680,810],[1256,565,830],[1264,615,770],[1270,690,845],[1277,655,760],[1282,590,982],[1286,585,930],[1292,620,930],[1298,574,900],[1304,690,835],[1311,650,765],[1317,600,912],[1323,597,725],[1329,625,845],[1335,680,955],[1340,683,905],[1343,740,905],[1346,1010,1105],[1354,998,1100],[1360,1010,1120],[1363,1040,1187],[1368,1060,1155],[1375,1060,1095],[1386,1053,1130],[1391,1080,1190],[1395,1085,1202]],
 [[1402,1120],[1424,1302],[1430,1295],[1442,1298],[1443,1050],[1445,1073],[1447,990],[1450,1040],[1451,985],[1455,1073],[1456,968],[1459,1000],[1462,975],[1465,1015],[1470,988],[1472,1050],[1474,1048]]);
noise('peak', 32, [[378,1290],[386,1293],[392,1279],[397,1292],[402,1298],[408,1288],[415,1288],[646,1207],[646,1233],[646,1215],[750,1075],[752,1168],[755,1178],[757,1070],[760,1058],[760,955]],
 [[763,685,930],[768,740,925],[772,800,880],[776,710,936],[781,620,845],[786,690,840],[791,650,860],[796,645,918],[801,640,820],[804,575,700],[808,180,748],[814,630,750],[821,690,850],[826,555,690],[832,570,635],[838,500,640],[845,500,850],[850,490,545],[857,485,650],[863,460,545],[868,450,495],[875,440,490],[882,430,470],[890,400,440],[897,370,440],[903,375,505],[910,340,530],[914,470,545],[920,555,635],[926,600,690],[931,620,862],[936,640,790],[942,650,730],[947,180,757],[953,670,730],[960,650,822],[966,690,740],[973,710,860],[980,308,860],[984,690,986],[990,690,765],[996,710,890],[1000,740,976],[1006,800,820],[1010,690,820],[1017,700,927],[1023,680,830],[1029,670,862],[1033,550,720],[1038,500,640],[1044,450,600],[1048,510,780],[1054,490,600],[1060,500,625],[1066,465,550],[1076,450,605],[1083,465,610],[1090,470,703],[1097,425,545],[1103,430,500],[1110,430,530],[1118,420,480],[1124,490,600],[1134,372,638],[1140,550,610],[1147,520,570],[1153,540,570],[1160,515,735],[1167,540,700],[1174,540,690],[1180,560,700],[1184,630,775],[1189,655,798],[1194,650,775],[1199,590,705],[1205,520,670],[1212,480,650],[1216,485,620],[1224,321,530],[1230,410,530],[1240,410,605],[1247,400,640],[1256,390,680],[1264,385,600],[1270,430,610],[1280,368,580],[1285,415,698],[1292,410,590],[1300,440,640],[1306,465,650],[1310,510,655],[1313,940,960],[1317,925,990],[1323,920,970],[1328,945,1045],[1333,960,1030],[1340,965,1000],[1352,980,1010],[1358,1000,1085],[1364,1010,1115]],
 [[1368,1035],[1391,1245],[1391,1268],[1411,1275],[1411,920],[1413,940],[1415,870],[1418,955],[1421,850],[1424,945],[1427,835],[1430,910],[1434,860],[1436,915],[1438,880],[1441,927],[1443,890]]);

// Thruster
const v = [[748,618,1349],[758,958,1349],[760,570,958],[764,375,960],[769,375,618],[812,862,1349],[816,862,1349],[849,862,1349],[855,862,1349],[911,618,1349],[914,375,1349],[926,862,1057],[933,862,1349],[940,375,862],[945,618,1349],[941,862,1250],[964,570,1057],[961,862,1057],[969,862,1349],[978,375,1349],[982,375,1349],[986,375,1349],[1016,375,1152],[1006,1057,1349],[1013,1057,1349],[1022,1057,1349],[1028,1057,1349],[1034,1105,1349],[1039,1105,1349],[1049,1105,1349],[1065,1105,1349],[1072,1105,1349],[1078,862,1349],[1084,618,1349],[1100,1008,1349],[1106,715,1008],[1114,667,862],[1110,862,1008],[1121,375,1349],[1126,375,1349],[1172,862,1057],[1188,1008,1349],[1196,862,1057],[1204,375,1349],[1208,375,1057],[1215,375,862],[1220,862,1008],[1408,862,1349],[1414,862,1349],[1421,862,1008],[1437,1008,1349]];
for (let x = 966; x <= 996; x += 4) v.push([x, 1057, 1349]);
for (let x = 1132; x <= 1158; x += 4) v.push([x, 375, 1349]);
for (let x = 1118; x <= 1168; x += 4) v.push([x, 862, 1349]);
const h = [[775,815,862],[810,858,1349],[849,988,862],[758,770,375],[764,776,618],[972,988,375],[958,1030,1057],[1030,1105,1105],[965,1040,1349],[1006,1048,1152],[1078,1170,862],[1118,1158,375],[1118,1170,1349],[1162,1208,1057],[1195,1275,862],[1202,1215,375],[1408,1424,862],[1415,1441,1008],[1060,1090,1349]];
document.getElementById('thr').innerHTML =
  '<path fill="#73bf69" fill-opacity=".09" d="M748 1349V958L775 862H812V1349zM849 1349V862H965V1057H1030V1105H1083V862H1170V1057H1196V862H1232V1349zM1232 1349L1240 862H1408V1349zM1415 1349V1008H1441V1349z"/>' +
  grid([289, 673, 1056], [181, 376, 570, 765, 959, 1152, 1349], 289, 1441, 181, 1349) +
  `<path ${NS} fill="none" stroke="#80c072" stroke-width="1.600" d="${v.map(a => `M${a[0]} ${a[1]}V${a[2]}`).join('')}M773 618L778 862M1232 1349L1240 862M1236 1349L1243 862M1275 862H1408M748 1349L757 958"/>` +
  `<path ${NS} fill="none" stroke="#80c072" stroke-width="4" stroke-linecap="round" d="${h.map(a => `M${a[0]} ${a[2]}H${a[1]}`).join('')}"/>` +
  dots(v.flatMap(a => [[a[0], a[1]], [a[0], a[2]]]));

// Small lakes: x, y, half length, half width, angle
const lakes = [[1080,120,18,7,30],[1145,140,10,6,30],[1190,66,10,5,0],[905,548,14,6,45],[928,620,12,4,0],[1155,485,12,4,0],[640,830,16,3,-20],[590,890,14,5,10],[710,838,10,6,20],[718,1055,14,6,30],[1350,525,14,7,-50],[1390,582,10,4,-60],[1300,600,10,4,10],[1240,625,10,4,0],[1315,640,12,4,10],[1170,742,18,4,-15],[1215,282,5,5,0],[1285,288,5,4,0],[1325,372,12,3,0],[868,964,5,4,0],[830,988,5,6,0],[1058,1122,6,6,0],[1180,1045,8,5,0],[1215,1060,8,14,-20],[1245,1110,26,5,-15],[1320,1080,26,5,-30],[790,1275,14,3,10],[735,1420,5,20,-15],[780,1370,7,14,-20],[815,1430,18,5,-50],[855,1450,14,5,50],[790,1235,6,4,0],[1000,1435,6,20,-40],[1100,1325,6,24,-15],[1165,1330,6,10,-10],[1220,1340,34,8,45],[1150,1415,30,6,-5],[1185,1465,16,8,30],[1300,1410,12,4,20],[1270,1380,12,5,-60],[1380,1445,30,8,-30],[1410,1325,16,8,0],[1140,1280,12,4,-40],[1155,1290,12,3,-40],[1300,1180,12,3,20],[1370,1145,4,10,0],[1425,1285,10,5,30],[1115,1475,7,8,0],[1225,1490,16,5,10],[992,1490,5,20,0],[1420,1000,30,5,-15],[1465,995,16,8,0],[1510,1018,18,5,-10],[1555,985,16,7,-30],[1532,1030,12,5,-50],[1610,1042,16,4,0],[1590,946,8,3,0],[1655,946,22,3,0],[1524,95,20,10,20],[1510,152,18,7,-10],[1615,140,22,14,30],[1640,110,4,12,0],[1590,170,5,18,-20],[1435,175,16,7,-40],[1450,140,10,4,0],[1655,150,12,5,0],[1995,135,22,8,20],[2100,215,7,5,0],[1742,282,5,4,0],[1863,318,18,5,-60],[2072,310,16,3,0],[2305,258,4,14,0],[2283,350,24,8,40],[2340,318,7,3,0],[1595,360,10,8,20],[1785,420,10,7,0],[1752,452,13,8,-10],[1710,450,8,4,0],[1963,395,8,12,-20],[2038,388,11,10,10],[1895,368,10,3,-60],[1792,346,6,4,0],[1618,416,7,3,0],[2172,455,8,10,0],[1620,475,20,9,10],[1838,517,9,8,0],[1920,525,32,9,-20],[1950,455,14,4,30],[1455,550,12,12,-40],[1590,590,10,20,15],[1485,610,8,10,0],[1505,628,12,5,-40],[1825,570,6,20,15],[1895,570,6,14,-20],[2156,572,7,6,0],[2200,575,7,6,0],[1824,670,7,4,0],[2300,682,10,3,-20],[2480,420,9,12,0],[2425,420,4,18,15],[2475,355,5,12,40],[2542,342,10,5,0],[2450,378,4,10,0],[2572,320,5,4,0],[2638,438,4,6,0],[2655,215,14,6,-15],[2662,100,14,26,-30],[2475,120,26,9,25],[2770,165,4,12,0],[2585,555,10,20,5],[2570,598,7,5,0],[2750,575,26,9,0],[2663,648,12,12,0],[2560,672,8,4,0],[1865,1018,26,16,10],[1980,1050,8,20,25],[2038,1050,8,14,-10],[2095,990,8,12,-30],[2155,1020,16,5,-10],[2180,1070,6,12,20],[1970,995,18,5,-50],[2022,1002,10,4,20],[1790,1125,14,26,-30],[1845,1150,6,26,-30],[1885,1165,6,26,-20],[2035,1165,10,18,20],[2000,1178,6,4,0],[1925,1192,6,4,0],[1950,1195,12,7,-40],[1700,1130,50,4,-42],[1660,1115,30,4,-10],[1595,1168,26,4,-25],[1620,1215,16,18,20],[1556,1218,6,14,-10],[1580,1110,10,14,-20],[1605,1130,16,5,10],[1530,1165,4,30,5],[1515,1175,4,20,10],[1430,1160,4,30,-10],[1450,1170,4,20,-20],[1470,1175,3,14,-20],[1430,1090,26,12,-10],[1490,1110,6,12,20],[1770,1072,8,4,-20],[1875,1225,5,4,0],[1975,1272,12,3,-10],[1975,1340,26,9,20],[2105,1345,32,10,-15],[1840,1338,26,5,-10],[1750,1360,22,6,-10],[1680,1330,5,12,25],[1625,1345,6,12,-30],[1625,1395,4,28,0],[1870,1422,30,12,10],[2020,1395,26,5,5],[1980,1435,18,10,-30],[2090,1435,8,14,-40],[1860,1375,36,3,-10],[1700,1420,10,3,-20],[1430,1365,8,18,-20],[1456,1402,9,5,0],[1520,1345,8,8,0],[1420,1280,8,5,0],[1470,1485,60,4,-18],[1425,1500,40,3,-8],[2300,1402,26,5,0],[2430,1410,44,12,-42],[2410,1215,24,6,-35],[2328,1320,8,14,20],[2383,1268,7,4,-30],[2488,1280,6,5,0],[2506,1330,6,6,0],[2335,1345,6,8,0],[2653,1372,8,4,-20],[2728,1305,6,5,0],[2728,1425,8,7,0],[2585,1445,26,4,10],[2668,1425,8,3,0],[2585,1230,5,3,0],[1467,820,4,6,0],[1015,897,10,3,-10],[1350,870,7,3,0],[1395,980,8,10,-30],[1400,1070,5,14,-20],[1385,1130,5,12,0],[1260,1130,16,3,-60],[1290,1095,12,3,-45],[1340,1060,20,3,-40],[1230,1075,10,3,50],[1355,1195,4,8,0],[1385,1190,4,8,0],[1170,1395,8,3,20],[1330,1450,14,4,-30],[1380,1480,20,5,-10],[1330,545,12,4,10],[1415,560,6,6,0],[1418,1180,3,16,-15],[1655,1125,8,3,60],[1680,1140,24,3,-50],[1575,1190,10,3,-20],[1560,1105,4,8,20]];
document.getElementById('lakes').innerHTML = lakes.map(([x, y, a, b, t]) => `<path transform="translate(${x} ${y}) rotate(${t})" d="M${-a} 0L${-a * .5} ${-b * .9}L${a * .2} ${-b * .6}L${a * .6} ${-b}L${a} ${b * .2}L${a * .4} ${b}L${-a * .4} ${b * .6}z"/>`).join('');
</script>
</body>
</html>
